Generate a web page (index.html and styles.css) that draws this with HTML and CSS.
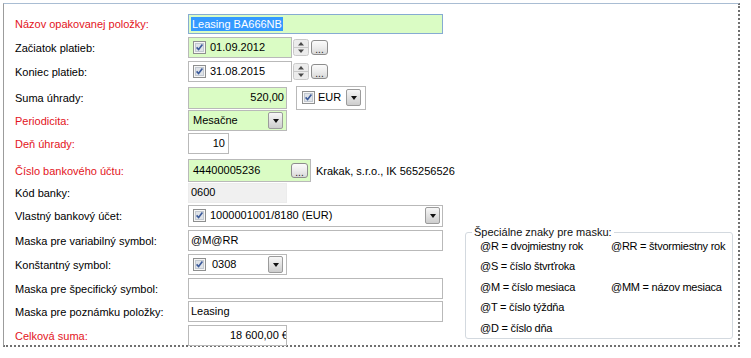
FILE: index.html
```html
<!DOCTYPE html>
<html lang="sk">
<head>
<meta charset="utf-8">
<title>Opakovaná položka</title>
<link rel="stylesheet" href="styles.css">
</head>
<body>
<div class="frame">
  <div class="form">
    <div class="row">
      <span class="lbl req">Názov opakovanej položky:</span>
      <div class="box green focus wide"><span class="sel">Leasing BA666NB</span></div>
    </div>
    <div class="row mt1">
      <span class="lbl">Začiatok platieb:</span>
      <div class="box green date">
        <svg class="chk" width="13" height="13" viewBox="0 0 13 13"><rect x="0.5" y="0.5" width="12" height="12" fill="#f6f6f6" stroke="#8e8f8f"/><rect x="2.5" y="2.5" width="8" height="8" fill="#dfe3e8" stroke="#c2c8d0"/><path d="M3.6 6.4 L5.6 8.6 L9.4 3.6" stroke="#3b5a9a" stroke-width="1.6" fill="none"/></svg>
        <span class="val">01.09.2012</span>
      </div>
      <svg class="spin" width="16" height="17" viewBox="0 0 16 17"><rect x="0.5" y="0.5" width="15" height="16" rx="2" fill="#ececec" stroke="#c9c9c9"/><line x1="1" y1="8.5" x2="15" y2="8.5" stroke="#c9c9c9"/><path d="M5 6.5h6l-3-3.5z" fill="#4a4a4a"/><path d="M5 10.5h6l-3 3.5z" fill="#4a4a4a"/></svg>
      <span class="dots">...</span>
    </div>
    <div class="row mt1">
      <span class="lbl">Koniec platieb:</span>
      <div class="box date">
        <svg class="chk" width="13" height="13" viewBox="0 0 13 13"><rect x="0.5" y="0.5" width="12" height="12" fill="#f6f6f6" stroke="#8e8f8f"/><rect x="2.5" y="2.5" width="8" height="8" fill="#dfe3e8" stroke="#c2c8d0"/><path d="M3.6 6.4 L5.6 8.6 L9.4 3.6" stroke="#3b5a9a" stroke-width="1.6" fill="none"/></svg>
        <span class="val">31.08.2015</span>
      </div>
      <svg class="spin" width="16" height="17" viewBox="0 0 16 17"><rect x="0.5" y="0.5" width="15" height="16" rx="2" fill="#ececec" stroke="#c9c9c9"/><line x1="1" y1="8.5" x2="15" y2="8.5" stroke="#c9c9c9"/><path d="M5 6.5h6l-3-3.5z" fill="#4a4a4a"/><path d="M5 10.5h6l-3 3.5z" fill="#4a4a4a"/></svg>
      <span class="dots">...</span>
    </div>
    <div class="row mt3">
      <span class="lbl">Suma úhrady:</span>
      <div class="box green short right tall">520,00</div>
      <div class="box cur">
        <svg class="chk" width="13" height="13" viewBox="0 0 13 13"><rect x="0.5" y="0.5" width="12" height="12" fill="#f6f6f6" stroke="#8e8f8f"/><rect x="2.5" y="2.5" width="8" height="8" fill="#dfe3e8" stroke="#c2c8d0"/><path d="M3.6 6.4 L5.6 8.6 L9.4 3.6" stroke="#3b5a9a" stroke-width="1.6" fill="none"/></svg>
        <span class="val">EUR</span>
        <span class="ddb"></span>
      </div>
    </div>
    <div class="row">
      <span class="lbl req">Periodicita:</span>
      <div class="box green short combo"><span>Mesačne</span><span class="ddb"></span></div>
    </div>
    <div class="row">
      <span class="lbl req">Deň úhrady:</span>
      <div class="box tiny right">10</div>
    </div>
    <div class="row mt4">
      <span class="lbl req">Číslo bankového účtu:</span>
      <div class="box green acct"><span>44400005236</span><span class="dots inner">...</span></div>
      <span class="note">Krakak, s.r.o., IK 565256526</span>
    </div>
    <div class="row mtn1">
      <span class="lbl">Kód banky:</span>
      <div class="box short ro">0600</div>
    </div>
    <div class="row">
      <span class="lbl">Vlastný bankový účet:</span>
      <div class="box wide combo tall2">
        <svg class="chk" width="13" height="13" viewBox="0 0 13 13"><rect x="0.5" y="0.5" width="12" height="12" fill="#f6f6f6" stroke="#8e8f8f"/><rect x="2.5" y="2.5" width="8" height="8" fill="#dfe3e8" stroke="#c2c8d0"/><path d="M3.6 6.4 L5.6 8.6 L9.4 3.6" stroke="#3b5a9a" stroke-width="1.6" fill="none"/></svg>
        <span class="val">1000001001/8180 (EUR)</span>
        <span class="ddb"></span>
      </div>
    </div>
    <div class="row mt2">
      <span class="lbl">Maska pre variabilný symbol:</span>
      <div class="box wide">@M@RR</div>
    </div>
    <div class="row mt1">
      <span class="lbl">Konštantný symbol:</span>
      <div class="box short combo">
        <svg class="chk" width="13" height="13" viewBox="0 0 13 13"><rect x="0.5" y="0.5" width="12" height="12" fill="#f6f6f6" stroke="#8e8f8f"/><rect x="2.5" y="2.5" width="8" height="8" fill="#dfe3e8" stroke="#c2c8d0"/><path d="M3.6 6.4 L5.6 8.6 L9.4 3.6" stroke="#3b5a9a" stroke-width="1.6" fill="none"/></svg>
        <span class="val sym">0308</span>
        <span class="ddb"></span>
      </div>
    </div>
    <div class="row mt1">
      <span class="lbl">Maska pre špecifický symbol:</span>
      <div class="box wide"></div>
    </div>
    <div class="row">
      <span class="lbl">Maska pre poznámku položky:</span>
      <div class="box wide">Leasing</div>
    </div>
    <div class="row mt1">
      <span class="lbl req">Celková suma:</span>
      <div class="box short right clip"><span class="cut">18 600,00 €</span></div>
    </div>
  </div>
  <div class="side">
    <fieldset class="group">
      <legend>Špeciálne znaky pre masku:</legend>
      <div class="codes">
        <span>@R = dvojmiestny rok</span><span>@RR = štvormiestny rok</span>
        <span>@S = číslo štvrťroka</span><span></span>
        <span>@M = číslo mesiaca</span><span>@MM = názov mesiaca</span>
        <span>@T = číslo týždňa</span><span></span>
        <span>@D = číslo dňa</span><span></span>
      </div>
    </fieldset>
  </div>
</div>
</body>
</html>
```
FILE: styles.css
```css
html, body {
  margin: 0;
  background: #fff;
}
body {
  font: 11px "Liberation Sans", Arial, sans-serif;
  color: #000;
}
.frame {
  margin: 3px 0 0 3px;
  width: 737px;
  height: 344px;
  box-sizing: border-box;
  border-top: 1px solid #a9bdd3;
  border-left: 1px solid #9c9c9c;
  border-right: 2px dotted #707070;
  border-bottom: 2px dotted #707070;
  padding-top: 8px;
  display: flex;
}
.form {
  width: 440px;
  flex: none;
  display: flex;
  flex-direction: column;
}
.row {
  height: 23px;
  display: flex;
  align-items: center;
  white-space: nowrap;
  flex: none;
}
.mt1 { margin-top: 1px; }
.mt2 { margin-top: 2px; }
.mt3 { margin-top: 3px; }
.mt4 { margin-top: 4px; }
.mtn1 { margin-top: -1px; }
.lbl {
  width: 184px;
  flex: none;
  box-sizing: border-box;
  padding-left: 11px;
  padding-top: 2px;
  line-height: 13px;
}
.req { color: #e3141c; }
.box {
  box-sizing: border-box;
  height: 21px;
  border: 1px solid #b9b9b9;
  background: #fff;
  display: flex;
  align-items: center;
  padding: 0 2px;
  flex: none;
  line-height: 13px;
}
.green { background: #dafcc4; }
.focus { border-color: #86abd2; height: 20px; }
.wide { width: 255px; }
.short { width: 99px; }
.tiny { width: 41px; }
.tall { height: 22px; }
.tall2 { height: 22px; }
.right { justify-content: flex-end; padding-right: 2px; }
.tiny.right { padding-right: 3px; }
.sel {
  background: #3399ff;
  color: #fff;
  line-height: 14px;
  padding: 0 1px 0 1px;
}
.date {
  width: 104px;
  padding-left: 4px;
}
.val { margin-left: 4px; }
.sym { margin-left: 6px; }
.chk { flex: none; display: block; }
.spin {
  display: block;
  flex: none;
  margin-left: 1px;
}
.dots {
  box-sizing: border-box;
  width: 17px;
  height: 15px;
  margin-left: 2px;
  border: 1px solid #8d8d8d;
  border-radius: 3px;
  background: linear-gradient(#fbfbfb, #ececec 50%, #d9d9d9);
  display: flex;
  justify-content: center;
  align-items: flex-end;
  line-height: 9px;
  font-size: 10px;
  color: #222;
  flex: none;
}
.dots.inner { margin-left: auto; }
.cur {
  width: 70px;
  height: 24px;
  margin-left: 9px;
  padding: 0 4px 0 5px;
}
.cur .val { margin-left: 3px; }
.combo { padding-left: 4px; padding-right: 3px; }
.wide.combo { padding-right: 2px; }
.ddb {
  box-sizing: border-box;
  width: 15px;
  height: 17px;
  margin-left: auto;
  border: 1px solid #9b9b9b;
  border-radius: 2px;
  background: linear-gradient(#f7f7f7, #e2e2e2 50%, #cdcdcd);
  display: flex;
  align-items: center;
  justify-content: center;
  flex: none;
}
.ddb::after {
  content: "";
  border-left: 3.5px solid transparent;
  border-right: 3.5px solid transparent;
  border-top: 4px solid #111;
  margin-top: 1px;
}
.acct {
  width: 123px;
  height: 23px;
  padding: 0 2px 0 4px;
}
.note { margin-left: 5px; padding-top: 1px; }
.ro {
  background: #f0f0f0;
  border-color: #ececec;
  height: 20px;
}
.clip { overflow: hidden; }
.cut { margin-right: -4px; }
.side {
  flex: 1;
  display: flex;
  flex-direction: column;
  justify-content: flex-end;
  padding: 0 0 6px 21px;
}
.group {
  width: 268px;
  box-sizing: border-box;
  margin: 0;
  padding: 0 0 0 6px;
  border: 1px solid #d3d9df;
  border-radius: 3px;
}
.group legend {
  padding: 0 2px;
  line-height: 13px;
  color: #111;
}
.codes {
  margin: -3px 0 0 8px;
  display: grid;
  grid-template-columns: 131px auto;
  grid-auto-rows: 20.5px;
  align-items: center;
  white-space: nowrap;
  letter-spacing: -0.25px;
}
```
